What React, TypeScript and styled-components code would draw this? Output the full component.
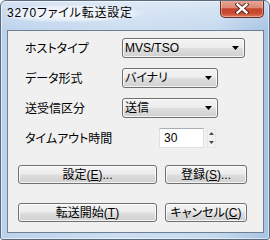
import React from "react";
import styled, { createGlobalStyle } from "styled-components";

const GlobalStyle = createGlobalStyle`
  html, body { margin: 0; padding: 0; background: #ffffff; }
  body {
    font-family: "Liberation Sans", "Noto Sans CJK JP", sans-serif;
    font-size: 12px;
    font-feature-settings: "palt";
  }
`;

const Window = styled.div`
  box-sizing: border-box;
  width: 270px;
  height: 240px;
  border: 1px solid #5b6b7e;
  border-radius: 6px 6px 3px 3px;
  background:
    linear-gradient(180deg, rgba(255,255,255,0.35) 0%, rgba(255,255,255,0) 30px),
    linear-gradient(90deg, #bcd2ec 0%, #cddef1 45%, #c6daef 80%, #a8c3e4 100%);
  box-shadow: inset 0 0 0 1px rgba(255, 255, 255, 0.55);
  padding: 0 5px 6px 6px;
  display: flex;
  flex-direction: column;
  overflow: hidden;
`;

const TitleBar = styled.div`
  height: 29px;
  display: flex;
  align-items: flex-start;
`;

const Title = styled.span`
  margin-top: 4px;
  padding: 0 10px 0 0;
  font-family: "Liberation Sans", "Noto Sans CJK JP", sans-serif;
  font-size: 12px;
  line-height: 17px;
  letter-spacing: 0.8px;
  color: #000;
  background: radial-gradient(ellipse at 45% 50%, rgba(255,255,255,0.85) 0%, rgba(255,255,255,0.5) 55%, rgba(255,255,255,0) 75%);
`;

const CloseButton = styled.div`
  margin-left: auto;
  margin-top: -1px;
  width: 44px;
  height: 18px;
  box-sizing: border-box;
  border: 1px solid #6b2b20;
  border-top: none;
  border-radius: 0 0 5px 5px;
  background: linear-gradient(180deg, #e9a898 0%, #dc8a76 45%, #c4432b 52%, #c94b31 78%, #e07a5f 100%);
  box-shadow: inset 0 0 0 1px rgba(255, 255, 255, 0.35);
  display: flex;
  align-items: center;
  justify-content: center;
`;

const Client = styled.div`
  flex: 1;
  border: 1px solid #6f7f92;
  background: #f0f0f0;
  display: flex;
  flex-direction: column;
`;

const Form = styled.div`
  display: grid;
  grid-template-columns: 97px auto;
  grid-auto-rows: 20px;
  row-gap: 10px;
  align-items: center;
  padding: 7px 0 0 17px;
`;

const Label = styled.span`
  font-family: "Noto Sans CJK JP", sans-serif;
  font-size: 12px;
  line-height: 16px;
  color: #000;
  white-space: nowrap;
`;

const Combo = styled.div<{ $w: number }>`
  box-sizing: border-box;
  width: ${(p) => p.$w}px;
  height: 20px;
  border: 1px solid #707070;
  border-radius: 3px;
  background: linear-gradient(180deg, #f4f4f4 0%, #ececec 48%, #dedede 52%, #d0d0d0 100%);
  box-shadow: inset 0 0 0 1px rgba(255, 255, 255, 0.75);
  display: flex;
  align-items: center;
  padding: 0 5px 0 2px;
  font-size: 12px;
  line-height: 16px;
  color: #000;
`;

const ComboText = styled.span`
  flex: 1;
  white-space: nowrap;
`;

const SpinRow = styled.div`
  display: flex;
  align-items: center;
  gap: 3px;
  margin-left: 37px;
`;

const NumberBox = styled.div`
  box-sizing: border-box;
  width: 45px;
  height: 20px;
  border: 1px solid #dde1e7;
  border-top-color: #abadb3;
  background: #ffffff;
  display: flex;
  align-items: center;
  padding-left: 4px;
  font-size: 12px;
  color: #000;
`;

const Spinner = styled.div`
  box-sizing: border-box;
  width: 9px;
  height: 19px;
  border: 1px solid #e6e6e6;
  background: #f2f2f2;
  display: flex;
  flex-direction: column;
  align-items: center;
  justify-content: space-around;
`;

const Buttons = styled.div`
  display: grid;
  grid-template-columns: 139px 82px;
  grid-auto-rows: 19px;
  column-gap: 8px;
  row-gap: 19px;
  padding: 17px 0 0 10px;
`;

const Button = styled.div`
  box-sizing: border-box;
  height: 19px;
  border: 1px solid #707070;
  border-radius: 3px;
  background: linear-gradient(180deg, #f4f4f4 0%, #ececec 48%, #dedede 52%, #d0d0d0 100%);
  box-shadow: inset 0 0 0 1px rgba(255, 255, 255, 0.75);
  display: flex;
  align-items: center;
  justify-content: center;
  font-size: 12px;
  line-height: 16px;
  color: #000;
  white-space: nowrap;
`;

const Key = styled.span`
  text-decoration: underline;
  text-underline-offset: 1px;
`;

const DownArrow = () => (
  <svg width="7" height="4" viewBox="0 0 7 4">
    <path d="M0 0h7L3.5 4z" fill="#000" />
  </svg>
);

const SpinArrow = ({ up }: { up?: boolean }) => (
  <svg width="5" height="3" viewBox="0 0 5 3">
    <path d={up ? "M0 3h5L2.5 0z" : "M0 0h5L2.5 3z"} fill="#4a4a4a" />
  </svg>
);

const CloseIcon = () => (
  <svg width="14" height="11" viewBox="0 0 14 11">
    <path d="M2.5 1.5L11.5 9.5M11.5 1.5L2.5 9.5" stroke="#4a1a12" strokeWidth="4.2" strokeLinecap="square" />
    <path d="M2.5 1.5L11.5 9.5M11.5 1.5L2.5 9.5" stroke="#ffffff" strokeWidth="2.4" strokeLinecap="square" />
  </svg>
);

export default function App() {
  return (
    <>
      <GlobalStyle />
      <Window>
        <TitleBar>
          <Title>3270ファイル転送設定</Title>
          <CloseButton>
            <CloseIcon />
          </CloseButton>
        </TitleBar>
        <Client>
          <Form>
            <Label>ホストタイプ</Label>
            <Combo $w={123}>
              <ComboText>MVS/TSO</ComboText>
              <DownArrow />
            </Combo>
            <Label>データ形式</Label>
            <Combo $w={96}>
              <ComboText>バイナリ</ComboText>
              <DownArrow />
            </Combo>
            <Label>送受信区分</Label>
            <Combo $w={96}>
              <ComboText>送信</ComboText>
              <DownArrow />
            </Combo>
            <Label>タイムアウト時間</Label>
            <SpinRow>
              <NumberBox>30</NumberBox>
              <Spinner>
                <SpinArrow up />
                <SpinArrow />
              </Spinner>
            </SpinRow>
          </Form>
          <Buttons>
            <Button>
              設定(<Key>E</Key>)...
            </Button>
            <Button>
              登録(<Key>S</Key>)...
            </Button>
            <Button>
              転送開始(<Key>T</Key>)
            </Button>
            <Button>
              キャンセル(<Key>C</Key>)
            </Button>
          </Buttons>
        </Client>
      </Window>
    </>
  );
}
